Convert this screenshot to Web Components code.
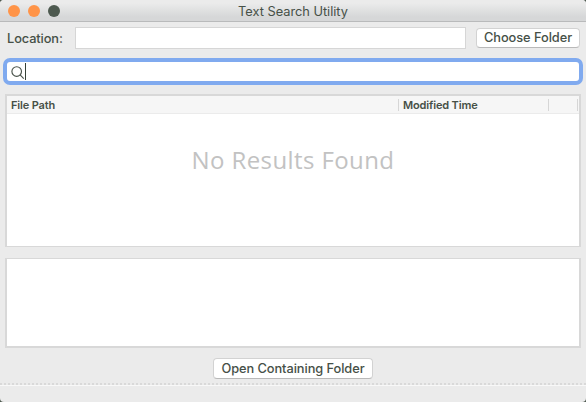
<!DOCTYPE html>
<html lang="en">
<head>
<meta charset="utf-8">
<title>Text Search Utility</title>
<style>
body { margin: 0; background: #4d594f; font-family: Inter, "Liberation Sans", sans-serif; color: #465047; overflow: hidden; }
</style>
</head>
<body>
<search-window></search-window>
<script>
const define = (name, html) => customElements.define(name, class extends HTMLElement {
  constructor() {
    super();
    const t = document.createElement('template');
    t.innerHTML = html;
    this.attachShadow({ mode: 'open' }).append(t.content.cloneNode(true));
  }
});

define('title-bar', `<style>
:host { display: grid; grid-template-columns: 80px 1fr 80px; align-items: center; height: 22px; box-sizing: border-box; border-bottom: 1px solid #b9babb; background: linear-gradient(#ebebeb 15%, #d6d7d8 80%); }
.dots { display: flex; gap: 7.5px; padding: 1px 0 0 7.7px; }
i { width: 12.5px; height: 12.5px; border-radius: 50%; background: #ff9448; }
i:last-child { background: #4d594f; }
.name { text-align: center; font-size: 12.8px; line-height: 16px; letter-spacing: -.02px; padding-top: 3px; white-space: nowrap; }
</style><div class="dots"><i></i><i></i><i></i></div><div class="name"><slot></slot></div>`);

define('push-button', `<style>
:host { display: block; height: 20px; box-sizing: border-box; border: 1px solid #d2d2d2; border-bottom-color: #b9b9b9; border-radius: 4px; background: #fff; text-align: center; font-size: 12.8px; font-weight: 500; line-height: 18px; white-space: nowrap; }
</style><slot></slot>`);

define('location-row', `<style>
:host { display: flex; align-items: center; height: 22px; padding: 0 6px 0 7px; }
.label { width: 68px; font-size: 12.8px; font-weight: 500; letter-spacing: -.1px; padding-top: 1px; }
.field { flex: 1; height: 22px; box-sizing: border-box; background: #fff; border: 1px solid #d6d6d6; margin-right: 10px; }
push-button { width: 104px; letter-spacing: -.05px; }
</style><div class="label">Location:</div><div class="field"></div><push-button>Choose Folder</push-button>`);

define('search-field', `<style>
:host { display: flex; align-items: center; height: 27px; box-sizing: border-box; margin: 0 3px; padding-left: 4px; border: 4px solid #80aaef; border-radius: 7px; background: #fff; }
svg { width: 14px; height: 14px; margin-top: 2px; }
.caret { width: 1px; height: 17px; background: #354037; }
</style><svg viewBox="0 0 14 14" fill="none" stroke="#4a534b" stroke-width="1.15"><circle cx="5.7" cy="5.5" r="4.8"/><path d="M9.1 8.9 12.8 12.6"/></svg><span class="caret"></span>`);

define('result-table', `<style>
:host { display: flex; flex-direction: column; height: 153px; box-sizing: border-box; margin: 0 5px; border: 2px solid #d8d8d8; border-bottom-width: 1.5px; background: #fff; }
.head { display: grid; grid-template-columns: 392px 150px 29px 1fr; align-items: center; height: 17px; background: #f6f6f6; border-bottom: 1px solid #ebebeb; font-size: 11px; font-weight: 600; letter-spacing: -.15px; line-height: 15px; white-space: nowrap; }
.head span { height: 12px; line-height: 13px; border-right: 1px solid #d6d6d6; box-sizing: border-box; padding-left: 4px; }
.empty { padding-top: 29px; text-align: center; font: 24px/34px "Open Sans", sans-serif; letter-spacing: .4px; color: #c2c2c2; }
</style><div class="head"><span>File Path</span><span>Modified Time</span><span></span></div><div class="empty">No Results Found</div>`);

define('preview-pane', `<style>
:host { display: block; height: 90px; box-sizing: border-box; margin: 0 5px; border: 2px solid #d8d8d8; border-top-width: 1.5px; background: #fff; }
</style>`);

define('search-window', `<style>
:host { display: flex; flex-direction: column; width: 586px; height: 402px; box-sizing: border-box; border-radius: 4px; overflow: hidden; background: #ebebeb; }
location-row { margin: 5px 0 9px; }
result-table { margin-top: 9px; }
preview-pane { margin-top: 11px; }
push-button { align-self: center; width: 160px; height: 21px; margin: 10px 0 4px; letter-spacing: -.06px; line-height: 19px; }
footer { height: 3px; border-top: 2px dotted #d9d9d9; border-bottom: 1px solid #f8f8f8; box-sizing: border-box; }
</style><title-bar>Text Search Utility</title-bar><location-row></location-row><search-field></search-field><result-table></result-table><preview-pane></preview-pane><push-button>Open Containing Folder</push-button><footer></footer>`);
</script>
</body>
</html>
